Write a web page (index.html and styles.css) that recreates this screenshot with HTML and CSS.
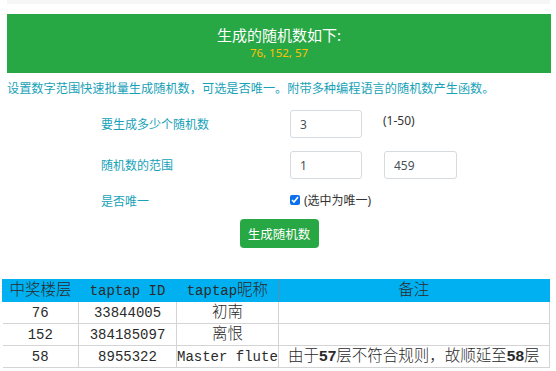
FILE: index.html
```html
<!DOCTYPE html>
<html>

<head>
    <title>随机数生成器</title>
    <meta name="viewport" content="width=device-width, initial-scale=1">
    <link rel="stylesheet" href="styles.css">
</head>

<body>
    <div class="topbar"></div>

    <div class="container">
        <div class="result">
            <h2>生成的随机数如下:</h2>
            <p class="nums">76, 152, 57</p>
        </div>

        <p class="intro">设置数字范围快速批量生成随机数，可选是否唯一。附带多种编程语言的随机数产生函数。</p>

        <form class="gen-form">
            <label class="field-label" for="count">要生成多少个随机数</label>
            <input type="text" id="count" class="field" value="3">
            <span class="hint">(1-50)</span>

            <label class="field-label" for="min">随机数的范围</label>
            <input type="text" id="min" class="field" value="1">
            <input type="text" id="max" class="field" value="459">

            <span class="field-label">是否唯一</span>
            <label class="check">
                <input type="checkbox" checked> (选中为唯一)
            </label>
        </form>

        <div class="actions">
            <button type="button" class="btn">生成随机数</button>
        </div>
    </div>

    <table class="winners">
        <thead>
            <tr>
                <th class="zh">中奖楼层</th>
                <th>taptap ID</th>
                <th>taptap<span class="zh">昵称</span></th>
                <th class="zh">备注</th>
            </tr>
        </thead>
        <tbody>
            <tr>
                <td>76</td>
                <td>33844005</td>
                <td class="zh">初南</td>
                <td></td>
            </tr>
            <tr>
                <td>152</td>
                <td>384185097</td>
                <td class="zh">离恨</td>
                <td></td>
            </tr>
            <tr>
                <td>58</td>
                <td>8955322</td>
                <td>Master flute</td>
                <td class="zh">由于<b>57</b>层不符合规则，故顺延至<b>58</b>层</td>
            </tr>
        </tbody>
    </table>
</body>

</html>
```

FILE: styles.css
```css
* {
    box-sizing: border-box;
    margin: 0;
    padding: 0;
}

body {
    font-family: "Noto Sans", "Noto Sans CJK SC", sans-serif;
    background: #fff;
    color: #333;
}

.topbar {
    height: 4px;
    margin: 0 6px 0 7px;
    background: #f6f6f6;
}

.container {
    padding: 10px 5px 0 7px;
}

.result {
    background: #28a745;
    height: 59px;
    padding-bottom: 2px;
    display: flex;
    flex-direction: column;
    align-items: center;
    justify-content: center;
}

.result h2 {
    color: #fff;
    font-size: 15px;
    font-weight: 400;
    line-height: 19px;
}

.nums {
    color: #ffc107;
    font-size: 11.5px;
    line-height: 15px;
}

.intro {
    color: #17a2b8;
    font-size: 12.2px;
    line-height: 18px;
    margin-top: 7px;
}

.gen-form {
    display: grid;
    grid-template-columns: 167px 72px 73px;
    column-gap: 22px;
    row-gap: 13px;
    align-items: center;
    padding-left: 94px;
    margin-top: 12px;
}

.field-label {
    color: #17a2b8;
    font-size: 12px;
}

.field {
    width: 72px;
    height: 28px;
    border: 1px solid #d6dbe0;
    border-radius: 3px;
    padding: 0 9px;
    font-family: inherit;
    font-size: 12px;
    color: #495057;
}

#max {
    width: 73px;
}

.hint {
    font-size: 12px;
    align-self: start;
    padding-top: 2px;
    margin-left: -1px;
}

.check {
    grid-column: span 2;
    font-size: 12px;
    display: flex;
    align-items: center;
    gap: 4px;
    margin-top: -3px;
}

.check input {
    width: 10px;
    height: 10px;
    margin: 0;
    accent-color: #0b6ff0;
}

.actions {
    display: flex;
    justify-content: center;
    margin-top: 9px;
}

.btn {
    background: #28a745;
    color: #fff;
    border: none;
    border-radius: 4px;
    width: 79px;
    height: 29px;
    font-family: inherit;
    font-size: 12.5px;
}

.winners {
    margin: 31px 0 0 2px;
    border-collapse: collapse;
    font-family: "Liberation Mono", "Noto Sans CJK SC", monospace;
    font-size: 14px;
    color: #2a2a2a;
    text-align: center;
}

.winners th,
.winners td {
    height: 22px;
    padding: 0;
    border: 1px solid #d4d4d4;
    font-weight: 400;
    line-height: 20px;
    white-space: nowrap;
}

.winners th {
    background: #00b0f0;
    border-color: #00b0f0;
}

.winners th:nth-child(1) { width: 76px; }
.winners th:nth-child(2) { width: 98px; }
.winners th:nth-child(3) { width: 101px; border-left-color: #5a8fa8; border-right-color: #5a8fa8; }
.winners th:nth-child(4) { width: 271px; }

.winners td:first-child {
    border-left: none;
}

.winners .zh {
    font-size: 15.5px;
    font-weight: 300;
}

.winners b {
    font-family: "Liberation Sans", sans-serif;
    font-weight: 700;
}
```
